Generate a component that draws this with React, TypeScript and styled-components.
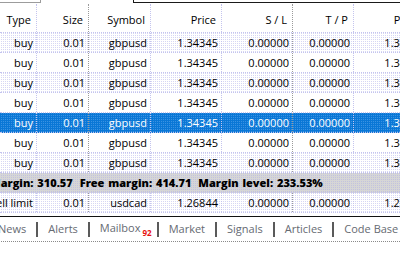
import { Fragment } from "react";
import styled, { createGlobalStyle } from "styled-components";

const GlobalStyle = createGlobalStyle`
  html, body {
    margin: 0;
    padding: 0;
    background: #fff;
  }
  body {
    width: 400px;
    height: 267px;
    overflow: hidden;
    font-family: "Open Sans", "Noto Sans", sans-serif;
    font-size: 11px;
    color: #000;
  }
`;

type Line = "lav" | "gray";
type RowKind = "plain" | "dots" | "selected";

const columns: { title: string; width: number; line: Line; headPad?: number }[] = [
  { title: "Type", width: 37, line: "lav" },
  { title: "Size", width: 52, line: "gray" },
  { title: "Symbol", width: 62, line: "lav" },
  { title: "Price", width: 71, line: "lav" },
  { title: "S / L", width: 71, line: "gray" },
  { title: "T / P", width: 61, line: "lav" },
  { title: "Price", width: 75, line: "lav", headPad: 9 },
];

const gridCols = columns.map((c) => `${c.width}px`).join(" ");

const orders = Array.from({ length: 7 }, () => ({
  type: "buy",
  size: "0.01",
  symbol: "gbpusd",
  price: "1.34345",
  sl: "0.00000",
  tp: "0.00000",
  current: "1.34345",
}));

const tabs = ["News", "Alerts", "Mailbox", "Market", "Signals", "Articles", "Code Base"];

const lineColor = { lav: "#c4c4ee", gray: "#9a9a9a" };

const dotted = (base: string, dot: string) => `
  background-color: ${base};
  background-image: conic-gradient(${dot} 25%, transparent 0);
  background-size: 2px 2px;
`;

const Page = styled.div`
  width: 400px;
  height: 267px;
  overflow: hidden;
  background: #fff;
`;

const TopStrip = styled.div`
  display: flex;
  height: 4px;
`;

const LeftEdge = styled.div`
  width: 40px;
  height: 2px;
  border-right: 1px solid #9c9c9c;
  border-bottom: 1px solid #9c9c9c;
`;

const RightEdge = styled.div`
  flex: 1;
  margin-left: 92px;
  height: 2px;
  border-left: 1px solid #1a1a1a;
  border-bottom: 1px solid #1a1a1a;
`;

const Table = styled.div`
  width: 400px;
  overflow: hidden;
`;

const Row = styled.div<{ $kind?: RowKind; $height?: number }>`
  display: grid;
  grid-template-columns: ${gridCols};
  height: ${(p) => p.$height ?? 19}px;
  border-bottom: 1px dotted ${lineColor.lav};
  color: ${(p) => (p.$kind === "selected" ? "#fff" : "#000")};
  ${(p) =>
    p.$kind === "dots"
      ? dotted("#fff", "#d6d6f4")
      : p.$kind === "selected"
      ? dotted("#0a77d6", "#3a92e2")
      : "background: #fff;"}
`;

const Cell = styled.div<{ $line: Line; $pad?: number; $top?: number }>`
  display: flex;
  justify-content: flex-end;
  align-items: center;
  padding-right: ${(p) => p.$pad ?? 3}px;
  padding-top: ${(p) => p.$top ?? 0}px;
  border-right: 1px dotted ${(p) => lineColor[p.$line]};
  overflow: hidden;
  white-space: nowrap;
`;

const SummaryRow = styled.div`
  display: flex;
  align-items: center;
  height: 19px;
  border-bottom: 1px dotted ${lineColor.lav};
  ${dotted("#d6d6d6", "#c2c2de")}
  font-weight: 700;
  white-space: nowrap;
  overflow: hidden;
`;

const SummaryText = styled.span`
  margin-left: -10px;
  word-spacing: 1px;

  b + b {
    margin-left: 7px;
  }
`;

const Gap = styled.div`
  height: 3px;
`;

const TabBar = styled.div`
  display: flex;
  align-items: center;
  height: 24px;
  border-top: 1px solid #111;
  border-bottom: 1px dotted #8a8a8a;
  margin-left: -12px;
  white-space: nowrap;
  overflow: hidden;
`;

const Tab = styled.span`
  flex-shrink: 0;
  padding: 0 10px 1px;
  color: #666a72;
  font-size: 11px;
`;

const Badge = styled.sup`
  color: #e81010;
  font-size: 8px;
  font-weight: 700;
  vertical-align: -4px;
  margin-left: 2px;
  margin-right: -5px;
`;

const Divider = styled.span`
  flex-shrink: 0;
  width: 2px;
  height: 15px;
  background: #5a5a5a;
`;

export default function App() {
  return (
    <Page>
      <GlobalStyle />
      <TopStrip>
        <LeftEdge />
        <RightEdge />
      </TopStrip>
      <Table>
        <Row $height={28}>
          {columns.map((c, i) => (
            <Cell key={i} $line={c.line} $pad={c.headPad ?? 5} $top={3}>
              {c.title}
            </Cell>
          ))}
        </Row>
        {orders.map((o, i) => (
          <Row key={i} $kind={i === 4 ? "selected" : i % 2 === 0 ? "dots" : "plain"}>
            <Cell $line="lav">{o.type}</Cell>
            <Cell $line="gray">{o.size}</Cell>
            <Cell $line="lav">{o.symbol}</Cell>
            <Cell $line="lav">{o.price}</Cell>
            <Cell $line="gray">{o.sl}</Cell>
            <Cell $line="lav">{o.tp}</Cell>
            <Cell $line="lav">{o.current}</Cell>
          </Row>
        ))}
        <SummaryRow>
          <SummaryText>
            <b>Margin: 310.57</b>
            <b>Free margin: 414.71</b>
            <b>Margin level: 233.53%</b>
          </SummaryText>
        </SummaryRow>
        <Row $kind="dots">
          <Cell $line="lav">sell limit</Cell>
          <Cell $line="gray">0.01</Cell>
          <Cell $line="lav">usdcad</Cell>
          <Cell $line="lav">1.26844</Cell>
          <Cell $line="gray">0.00000</Cell>
          <Cell $line="lav">0.00000</Cell>
          <Cell $line="lav">1.26844</Cell>
        </Row>
      </Table>
      <Gap />
      <TabBar>
        {tabs.map((t, i) => (
          <Fragment key={t}>
            {i > 0 && <Divider />}
            <Tab>
              {t}
              {t === "Mailbox" && <Badge>92</Badge>}
            </Tab>
          </Fragment>
        ))}
      </TabBar>
    </Page>
  );
}
